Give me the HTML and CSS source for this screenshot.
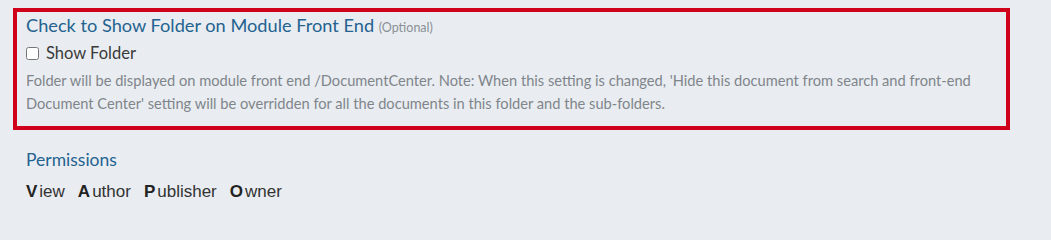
FILE: index.html
```html
<!DOCTYPE html>
<html>
<head>
<meta charset="utf-8">
<link rel="stylesheet" href="styles.css">
</head>
<body>
<div class="page">
  <section class="setting-box">
    <h3 class="setting-title">Check to Show Folder on Module Front End <span class="optional">(Optional)</span></h3>
    <label class="check-row"><input type="checkbox" class="check"><span>Show Folder</span></label>
    <p class="help">Folder will be displayed on module front end /DocumentCenter. Note: When this setting is changed, 'Hide this document from search and front-end Document Center' setting will be overridden for all the documents in this folder and the sub-folders.</p>
  </section>
  <section class="perms">
    <h3 class="perms-title">Permissions</h3>
    <div class="tabs">
      <span class="tab"><b>V</b>iew</span>
      <span class="tab"><b>A</b>uthor</span>
      <span class="tab"><b>P</b>ublisher</span>
      <span class="tab"><b>O</b>wner</span>
    </div>
  </section>
</div>
</body>
</html>
```
FILE: styles.css
```css
html, body {
  margin: 0;
  padding: 0;
  background: #e9edf1;
}
.page {
  padding: 8px 0 0 13px;
  font-family: Lato, "Liberation Sans", sans-serif;
}
.setting-box {
  box-sizing: border-box;
  width: 997px;
  height: 122px;
  border: 4px solid #d0021b;
  padding: 2px 9px 0 9px;
}
.setting-title {
  margin: 0;
  font-size: 18.2px;
  font-weight: 400;
  color: #24628f;
  line-height: 23px;
}
.optional {
  font-size: 12.5px;
  color: #8a8f95;
}
.check-row {
  display: flex;
  align-items: center;
  gap: 7px;
  margin-top: 4px;
  font-size: 16.5px;
  color: #3a3a3a;
  line-height: 20px;
}
.check {
  margin: 0;
  width: 13px;
  height: 13px;
}
.help {
  margin: 6px 0 0 0;
  font-size: 14.65px;
  line-height: 23px;
  color: #80858b;
}
.perms {
  padding: 18px 0 0 13px;
}
.perms-title {
  margin: 0;
  font-size: 17.5px;
  font-weight: 400;
  color: #24628f;
  line-height: 24px;
}
.tabs {
  display: flex;
  gap: 13px;
  margin-top: 10px;
  font-family: "Liberation Sans", Arial, sans-serif;
  font-size: 17px;
  color: #333;
  line-height: 20px;
}
.tab b {
  color: #222;
  margin-right: 2px;
}
```
